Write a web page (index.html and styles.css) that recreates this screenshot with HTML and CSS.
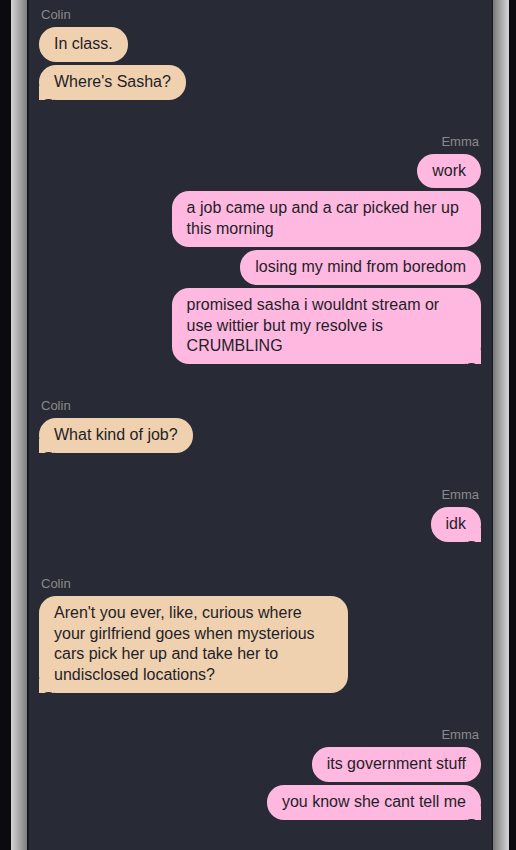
FILE: index.html
```html
<!DOCTYPE html>
<html lang="en">
<head>
  <meta charset="UTF-8">
  <meta name="viewport" content="width=device-width, initial-scale=1.0">
  <title>Chat</title>
  <link rel="stylesheet" href="styles.css">
</head>
<body>
  <div class="frame">
    <div class="chat">
      <div class="group them">
        <div class="name">Colin</div>
        <div class="bubble">In class.</div>
        <div class="bubble tail">Where's Sasha?</div>
      </div>

      <div class="group me">
        <div class="name">Emma</div>
        <div class="bubble">work</div>
        <div class="bubble">a job came up and a car picked her up this morning</div>
        <div class="bubble">losing my mind from boredom</div>
        <div class="bubble tail">promised sasha i wouldnt stream or use wittier but my resolve is CRUMBLING</div>
      </div>

      <div class="group them">
        <div class="name">Colin</div>
        <div class="bubble tail">What kind of job?</div>
      </div>

      <div class="group me">
        <div class="name">Emma</div>
        <div class="bubble tail">idk</div>
      </div>

      <div class="group them">
        <div class="name">Colin</div>
        <div class="bubble tail">Aren't you ever, like, curious where your girlfriend goes when mysterious cars pick her up and take her to undisclosed locations?</div>
      </div>

      <div class="group me">
        <div class="name">Emma</div>
        <div class="bubble">its government stuff</div>
        <div class="bubble tail">you know she cant tell me</div>
      </div>
    </div>
  </div>
</body>
</html>
```

FILE: styles.css
```css
:root {
  --page-bg: #0b0b0f;
  --panel-bg: #282a36;
  --panel-edge: #17181f;
  --name-color: #8a8a8a;
  --text-color: #1e1f29;
  --them-bg: #efd0af;
  --me-bg: #ffb8e0;
}

html, body {
  height: 100%;
}

body {
  margin: 0;
  background-color: var(--page-bg);
  font-family: "Liberation Sans", Arial, sans-serif;
  overflow: hidden;
}

/* grey bevel strips either side of the chat column */
.frame {
  width: 466px;
  min-height: 100%;
  margin-left: 11px;
  padding: 0 16px;
  background:
    linear-gradient(90deg, #d4d4d4 0, #7e7e7e 16px, transparent 16px),
    linear-gradient(270deg, #d6d6d6 0, #7a7a7a 16px, transparent 16px);
}

.chat {
  min-height: 850px;
  box-sizing: border-box;
  padding: 8px 11px 0 10px;
  background-color: var(--panel-bg);
  border-left: 2px solid var(--panel-edge);
  border-right: 1px solid var(--panel-edge);
}

.group {
  display: flex;
  flex-direction: column;
  align-items: flex-start;
  margin-bottom: 35px;
}

.group.me {
  align-items: flex-end;
}

.name {
  font-size: 13px;
  line-height: 14px;
  color: var(--name-color);
  margin: 0 2px 5px;
}

.bubble {
  position: relative;
  max-width: 70%;
  box-sizing: border-box;
  padding: 7px 15px;
  font-size: 16px;
  line-height: 1.3;
  color: var(--text-color);
  border-radius: 17px;
}

.bubble + .bubble {
  margin-top: 3px;
}

.them .bubble {
  background-color: var(--them-bg);
}

.me .bubble {
  background-color: var(--me-bg);
}

/* squared corner with a small notch on the last bubble of a group */
.bubble.tail::before,
.bubble.tail::after {
  content: "";
  position: absolute;
  bottom: 0;
}

.bubble.tail::before {
  width: 14px;
  height: 14px;
  background-color: inherit;
}

.bubble.tail::after {
  bottom: -1px;
  width: 7px;
  height: 2px;
  border-radius: 50% 50% 0 0;
  background-color: var(--panel-bg);
}

.them .bubble.tail::before {
  left: 0;
}

.them .bubble.tail::after {
  left: 6px;
}

.me .bubble.tail::before {
  right: 0;
}

.me .bubble.tail::after {
  right: 6px;
}
```
